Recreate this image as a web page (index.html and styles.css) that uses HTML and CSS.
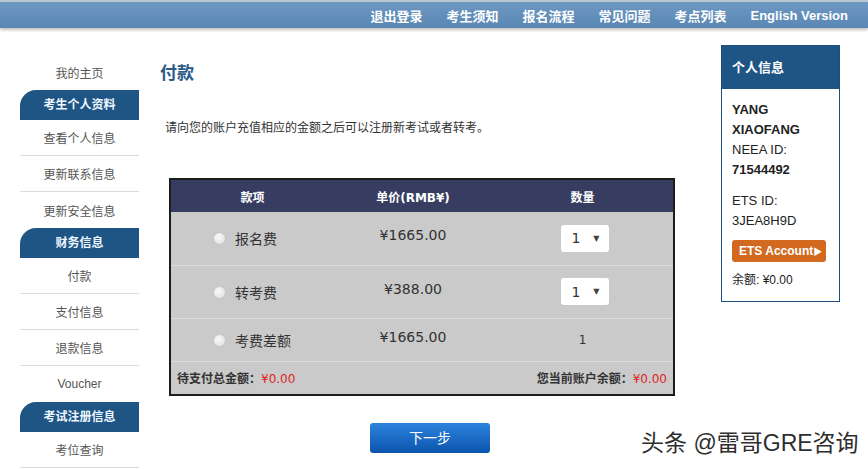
FILE: index.html
```html
<!DOCTYPE html>
<html lang="zh-CN">
<head>
    <meta charset="utf-8" />
    <title>付款</title>
    <link rel="stylesheet" href="styles.css">
</head>
<body>
    <!--顶部导航-->
    <div class="topbar">
        <a href="#">退出登录</a>
        <a href="#">考生须知</a>
        <a href="#">报名流程</a>
        <a href="#">常见问题</a>
        <a href="#">考点列表</a>
        <a href="#">English Version</a>
    </div>

    <div class="wrap">
        <!--左侧菜单-->
        <div class="sidebar">
            <ul>
                <li class="last"><a href="#">我的主页</a></li>
            </ul>
            <div class="side-title">考生个人资料</div>
            <ul>
                <li><a href="#">查看个人信息</a></li>
                <li><a href="#">更新联系信息</a></li>
                <li class="last"><a href="#">更新安全信息</a></li>
            </ul>
            <div class="side-title">财务信息</div>
            <ul>
                <li><a href="#">付款</a></li>
                <li><a href="#">支付信息</a></li>
                <li><a href="#">退款信息</a></li>
                <li class="last"><a href="#">Voucher</a></li>
            </ul>
            <div class="side-title">考试注册信息</div>
            <ul>
                <li><a href="#">考位查询</a></li>
            </ul>
        </div>

        <!--主体-->
        <div class="main">
            <h2 class="title">付款</h2>
            <p class="desc">请向您的账户充值相应的金额之后可以注册新考试或者转考。</p>
            <table class="pay">
                <colgroup>
                    <col class="c1">
                    <col class="c2">
                    <col class="c3">
                </colgroup>
                <tr>
                    <th>款项</th>
                    <th>单价(RMB¥)</th>
                    <th>数量</th>
                </tr>
                <tr class="row">
                    <td class="item"><span class="radio"></span>报名费</td>
                    <td class="price">¥1665.00</td>
                    <td><span class="select">1<i>▼</i></span></td>
                </tr>
                <tr class="row">
                    <td class="item"><span class="radio"></span>转考费</td>
                    <td class="price">¥388.00</td>
                    <td><span class="select">1<i>▼</i></span></td>
                </tr>
                <tr class="row short">
                    <td class="item"><span class="radio"></span>考费差额</td>
                    <td class="price">¥1665.00</td>
                    <td class="num">1</td>
                </tr>
                <tr class="foot">
                    <td colspan="3">
                        <div class="sum">
                            <span>待支付总金额：<em>¥0.00</em></span>
                            <span>您当前账户余额：<em>¥0.00</em></span>
                        </div>
                    </td>
                </tr>
            </table>
            <div class="next">
                <a href="#" class="btn">下一步</a>
            </div>
        </div>

        <!--个人信息-->
        <div class="info">
            <div class="info-title">个人信息</div>
            <div class="info-body">
                <p><b>YANG<br>XIAOFANG</b></p>
                <p>NEEA ID:</p>
                <p><b>71544492</b></p>
                <p class="gap">ETS ID:</p>
                <p>3JEA8H9D</p>
                <a href="#" class="ets">ETS Account<i>▶</i></a>
                <p class="balance">余额: ¥0.00</p>
            </div>
        </div>
    </div>

    <div class="mark">头条 @雷哥GRE咨询</div>
</body>
</html>
```

FILE: styles.css
```css
* {
    margin: 0;
    padding: 0
}

ul {
    list-style: none
}

a {
    text-decoration: none
}

body {
    width: 868px;
    height: 469px;
    overflow: hidden;
    position: relative;
    background-color: #fff;
    font-family: "Liberation Sans", "Noto Sans CJK SC", sans-serif;
    color: #222;
}

.topbar {
    height: 26px;
    border-top: 2px solid #b9c6d3;
    background: linear-gradient(#6c98c2, #5a87b3);
    box-shadow: 0 2px 3px rgba(0, 0, 0, 0.25);
    display: flex;
    justify-content: flex-end;
    align-items: center;
    gap: 24px;
    padding-right: 20px;
}

    .topbar a {
        color: #fff;
        font-size: 13px;
        font-weight: bold;
    }

.wrap {
    display: flex;
    padding: 0 28px 0 20px;
}

.sidebar {
    width: 119px;
    margin-top: 26px;
}

    .sidebar li {
        height: 35px;
        border-bottom: 1px solid #dcdcdc;
        display: flex;
        align-items: center;
        justify-content: center;
    }

        .sidebar li.last {
            height: 36px;
            border-bottom: none;
        }

        .sidebar li a {
            color: #555;
            font-size: 12px;
        }

.side-title {
    height: 30px;
    line-height: 30px;
    background-color: #1f5585;
    border-top-left-radius: 16px;
    color: #eef7ff;
    font-size: 12px;
    font-weight: bold;
    text-align: center;
}

.main {
    flex: 1;
    padding-left: 21px;
}

.title {
    margin-top: 34px;
    font-size: 17px;
    line-height: 24px;
    color: #2a5a88;
}

.desc {
    margin-top: 32px;
    padding-left: 5px;
    font-size: 12px;
    line-height: 20px;
    color: #333;
}

.pay {
    margin: 40px 0 0 9px;
    width: 506px;
    border-collapse: collapse;
    border: 2px solid #1c1c1c;
    background-color: #cacaca;
    font-family: "DejaVu Sans", "Noto Sans CJK SC", sans-serif;
    color: #333;
}

    .pay .c1 {
        width: 164px;
    }

    .pay .c2 {
        width: 158px;
    }

    .pay th {
        height: 32px;
        background-color: #363d61;
        color: #fff;
        font-size: 12px;
        font-weight: bold;
    }

    .pay td {
        text-align: center;
        vertical-align: middle;
    }

    .pay .row {
        height: 53px;
        border-bottom: 1px solid #dedede;
    }

    .pay .short {
        height: 43px;
    }

    .pay .item {
        text-align: left;
        padding-left: 42px;
        font-family: "Noto Sans CJK SC", sans-serif;
        font-size: 14px;
    }

    .pay .price {
        font-size: 14px;
        padding-bottom: 6px;
    }

    .pay .num {
        font-size: 12px;
    }

.radio {
    display: inline-block;
    width: 11px;
    height: 11px;
    margin-right: 9px;
    vertical-align: -1px;
    border-radius: 50%;
    border: 1px solid #c4c4c4;
    background: radial-gradient(circle at 40% 35%, #fafafa, #dcdcdc);
}

.select {
    display: inline-flex;
    align-items: center;
    justify-content: space-between;
    width: 48px;
    height: 27px;
    padding: 0 9px 0 11px;
    box-sizing: border-box;
    background-color: #fff;
    border-radius: 3px;
    font-size: 14px;
    margin-left: 4px;
}

    .select i {
        font-style: normal;
        font-size: 8px;
        color: #444;
    }

.pay .foot {
    height: 34px;
}

.sum {
    display: flex;
    justify-content: space-between;
    padding: 0 6px;
    font-family: "Noto Sans CJK SC", sans-serif;
    font-size: 12px;
    font-weight: bold;
    color: #333;
}

    .sum em {
        font-style: normal;
        font-weight: normal;
        font-family: "DejaVu Sans", sans-serif;
        color: #e02323;
    }

.next {
    margin-top: 27px;
    padding-right: 21px;
    display: flex;
    justify-content: center;
}

.btn {
    width: 120px;
    height: 30px;
    line-height: 30px;
    text-align: center;
    border-radius: 3px;
    background: linear-gradient(#2d83dc, #0b54ad);
    color: #fff;
    font-size: 14px;
}

.info {
    width: 117px;
    margin-top: 17px;
    align-self: flex-start;
    border: 1px solid #1f4f7e;
}

.info-title {
    height: 43px;
    line-height: 43px;
    padding-left: 10px;
    background-color: #1f5585;
    color: #fff;
    font-size: 13px;
    font-weight: bold;
}

.info-body {
    padding: 11px 10px 11px 10px;
    font-size: 13px;
    line-height: 20px;
}

    .info-body .gap {
        margin-top: 11px;
    }

.ets {
    display: inline-block;
    margin-top: 9px;
    width: 94px;
    height: 22px;
    line-height: 22px;
    box-sizing: border-box;
    padding-left: 7px;
    border-radius: 3px;
    background-color: #d2691f;
    color: #fff;
    font-size: 12px;
    font-weight: bold;
}

    .ets i {
        font-style: normal;
        font-size: 9px;
    }

.balance {
    margin-top: 8px;
    font-size: 12px;
}

.mark {
    position: absolute;
    left: 641px;
    top: 427px;
    font-size: 23px;
    line-height: 32px;
    color: #2e2e2e;
    text-shadow: 1px 1px 0 #fff, -1px 0 0 #fff;
}
```
